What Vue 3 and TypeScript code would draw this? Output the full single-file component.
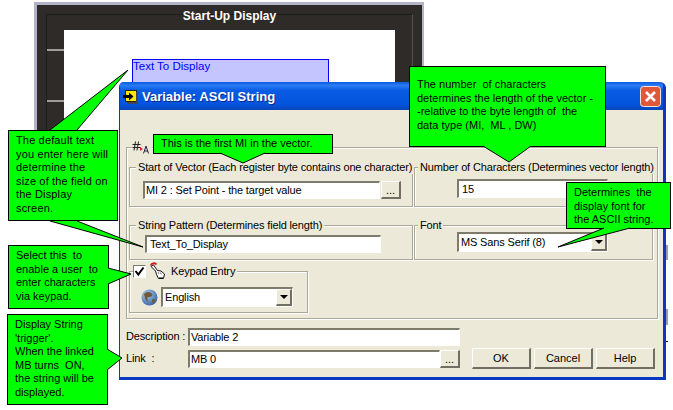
<script setup lang="ts">
interface Callout { x: number; y: number; w: number; h: number; lines: string[]; cls?: string }
const callouts: Callout[] = [
  { x: 8, y: 130, w: 110, h: 91, lines: ['The default text', 'you enter here will', 'determine the', 'size of the field on', 'the Display', 'screen.'], cls: 'airy' },
  { x: 153, y: 134, w: 180, h: 20, lines: ['This is the first MI in the vector.'], cls: 'tight' },
  { x: 409, y: 66, w: 197, h: 81, lines: ['The number  of characters', 'determines the length of the vector -', '-relative to the byte length of  the', 'data type (MI,  ML , DW)'], cls: 'deep' },
  { x: 566, y: 182, w: 105, h: 47, lines: ['Determines  the', 'display font for', 'the ASCII string.'] },
  { x: 8, y: 245, w: 101, h: 64, lines: ['Select this  to', 'enable a user  to', 'enter characters', 'via keypad.'] },
  { x: 7, y: 314, w: 101, h: 91, lines: ['Display String', "'trigger'.", 'When the linked', 'MB turns  ON,', 'the string will be', 'displayed.'] },
]
const tails: string[] = [
  '50,130 128,70 77,130',
  '50,221 143,247 77,221',
  '220,153 243,163 265,153',
  '483,146 509,162 531,146',
  '604,228 558,247 630,228',
  '108,268 131,274 108,284',
  '107,349 122,358 107,370',
]
</script>

<template>
  <div class="stage">
    <section class="backdrop">
      <div class="bezel">
        <h1 class="bezel-title">Start-Up Display</h1>
        <div class="bezel-body">
          <i class="tick"></i>
          <i class="tick second"></i>
          <div class="screen"></div>
        </div>
      </div>
    </section>
    <div class="field-box">Text To Display</div>
    <i class="behind b1"></i>
    <i class="behind b2"></i>
    <i class="behind b3"></i>

    <section class="dialog">
      <header class="titlebar">
        <svg class="title-icon" width="15" height="15" viewBox="0 0 15 15">
          <rect x="2.500" y="1.500" width="11" height="11" fill="#ffe900" stroke="#222" />
          <rect x="13" y="3" width="2" height="11" fill="#445" />
          <rect x="4" y="13" width="11" height="2" fill="#445" />
          <path d="M0 6h6V3.500L10.500 7.500 6 11.500V9H0z" fill="#000" />
        </svg>
        <span class="title-text">Variable: ASCII String</span>
        <button class="close">
          <svg width="21" height="21" viewBox="0 0 21 21">
            <rect x=".5" y=".5" width="20" height="20" rx="3" fill="#e0583a" stroke="#f6e4dc" />
            <path d="M6 6l9 9M15 6l-9 9" stroke="#fff" stroke-width="2.600" />
          </svg>
        </button>
      </header>

      <div class="client">
        <fieldset class="group main">
          <legend class="main-legend">
            <svg width="17" height="13" viewBox="0 0 17 13">
              <path d="M3.500 .5L2 9.500M6.500 .5L5 9.500M.5 3.500h8M.5 6.500h8" stroke="#222" fill="none" />
              <path d="M8 6l3 2-3 2z" fill="#d22" />
              <path d="M11.500 12.500L14 5l2.500 7.500M12.500 10h3.500" stroke="#224" fill="none" />
            </svg>
          </legend>
          <div class="main-grid">
            <fieldset class="group">
              <legend>Start of Vector (Each register byte contains one character)</legend>
              <div class="row vector-row">
                <div class="sunken grow">MI 2 : Set Point - the target value</div>
                <button class="raised dots">...</button>
              </div>
            </fieldset>
            <fieldset class="group col2">
              <legend>Number of Characters (Determines vector length)</legend>
              <div class="row chars-row"><div class="sunken grow pad">15</div></div>
            </fieldset>
            <fieldset class="group">
              <legend>String Pattern (Determines field length)</legend>
              <div class="row pattern-row"><div class="sunken grow pad">Text_To_Display</div></div>
            </fieldset>
            <fieldset class="group col2">
              <legend>Font</legend>
              <div class="row font-row">
                <div class="sunken grow combo">MS Sans Serif (8)<span class="arrow"></span></div>
              </div>
            </fieldset>
          </div>

          <fieldset class="group keypad">
            <legend class="keypad-legend">
              <span class="check">
                <svg width="11" height="11" viewBox="0 0 11 11"><path d="M1.500 5l2.800 3.500L9.500 1.500" stroke="#000" stroke-width="2" fill="none" /></svg>
              </span>
              <svg class="hand" width="16" height="18" viewBox="0 0 16 18">
                <path d="M.8 3.500C1.500 1 5 .5 6.500 2.500" stroke="#d01818" stroke-width="1.800" fill="none" />
                <path d="M1 4.500l2.500-1.500 4 5.500 3.500.5 3.500 3-1 4.500H8.500L6.500 12.500 5.500 9z" fill="#fff" stroke="#111" />
                <path d="M8 10l1 2M10.500 10.500l.8 2M9 15.500h4" stroke="#777" fill="none" />
              </svg>
              <span class="keypad-text">Keypad Entry</span>
            </legend>
            <div class="row lang-row">
              <svg class="globe" width="17" height="17" viewBox="0 0 17 17">
                <defs>
                  <radialGradient id="globeFill" cx=".35" cy=".3" r=".8">
                    <stop offset="0" stop-color="#a8ccf0" />
                    <stop offset="1" stop-color="#2f5f9f" />
                  </radialGradient>
                </defs>
                <circle cx="8.500" cy="8.500" r="8" fill="url(#globeFill)" />
                <path d="M4 4c3-2 6-1 7 1s-1 3-3 3-2 2-1 4-3-1-3-3-2-3 0-5zM12 10c2 0 3 0 2 2s-3 3-3 1 0-3 1-3z" fill="#6f5a3a" />
              </svg>
              <div class="sunken grow combo">English<span class="arrow"></span></div>
            </div>
          </fieldset>
        </fieldset>

        <div class="footer">
          <div class="meta">
            <div class="meta-row">
              <span class="meta-label">Description :</span>
              <div class="sunken desc">Variable 2</div>
            </div>
            <div class="meta-row">
              <span class="meta-label">Link &nbsp;:</span>
              <div class="sunken link">MB 0</div>
              <button class="raised dots">...</button>
            </div>
          </div>
          <div class="actions">
            <button class="raised action">OK</button>
            <button class="raised action">Cancel</button>
            <button class="raised action">Help</button>
          </div>
        </div>
      </div>
    </section>

    <div
      v-for="(c, i) in callouts"
      :key="i"
      class="callout"
      :class="c.cls"
      :style="{ left: c.x + 'px', top: c.y + 'px', width: c.w + 'px', height: c.h + 'px' }"
    >
      <div v-for="(l, j) in c.lines" :key="j">{{ l }}</div>
    </div>

    <svg class="tails" width="673" height="410" viewBox="0 0 673 410">
      <g v-for="(t, i) in tails" :key="i">
        <polygon :points="t" fill="#00ff00" />
        <polyline :points="t" fill="none" stroke="#000" />
      </g>
    </svg>
  </div>
</template>

<style>
html, body { margin: 0; background: #fff; }
</style>

<style scoped>
.stage {
  position: relative;
  width: 673px;
  height: 410px;
  overflow: hidden;
  background: #fff;
  font-family: "Liberation Sans", Arial, sans-serif;
  font-size: 11px;
  letter-spacing: -.15px;
  color: #000;
}
.backdrop {
  position: absolute;
  left: 34px;
  top: 2px;
  width: 390px;
  height: 200px;
  box-sizing: border-box;
  border: solid #b4b4c8;
  border-width: 3px 2px 0 3px;
  background: #2f2b28;
}
.bezel {
  margin: 9px 9px 0;
  height: 190px;
  border: solid #1b1d1a;
  border-right-color: #56544f;
  border-width: 1px 1px 0 1px;
  display: flex;
  flex-direction: column;
}
.bezel-title {
  margin: -9px 0 0;
  height: 24px;
  line-height: 21px;
  text-align: center;
  font-size: 12px;
  font-weight: 700;
  letter-spacing: 0;
  color: #fff;
}
.bezel-body { position: relative; flex: 1; padding: 0 17px; }
.screen { height: 100%; background: #fff; }
.tick { position: absolute; left: 0; top: 19px; width: 17px; height: 2px; background: #a09c98; }
.tick.second { top: 70px; }
.field-box {
  position: absolute;
  left: 132px;
  top: 59px;
  width: 197px;
  height: 24px;
  box-sizing: border-box;
  border: 1px solid #0000ff;
  background: #c4c4ff;
  color: #0000ff;
  font-size: 11.500px;
  line-height: 13px;
  letter-spacing: 0;
}
.behind { position: absolute; left: 666px; width: 2px; background: #9a9aa8; }
.b1 { top: 245px; height: 15px; }
.b2 { top: 309px; height: 16px; }
.b3 { top: 341px; height: 1px; background: #000; }
.dialog {
  position: absolute;
  left: 119px;
  top: 82px;
  width: 547px;
  height: 298px;
  box-sizing: border-box;
  display: flex;
  flex-direction: column;
  border: solid #0a38c0;
  border-width: 0 3px 3px 1px;
  border-top-left-radius: 5px;
  border-top-right-radius: 6px;
  background: #ece9d8;
}
.titlebar {
  height: 28px;
  flex: none;
  display: flex;
  align-items: center;
  padding: 0 2px 0 3px;
  border-top-left-radius: 4px;
  border-top-right-radius: 4px;
  background: linear-gradient(180deg, #0a5ae0 0%, #2a7cf4 12%, #0a5ce4 30%, #0454dc 80%, #0a44b8 100%);
}
.title-icon { margin-right: 4px; flex: none; }
.title-text {
  flex: 1;
  color: #fff;
  font-size: 13px;
  font-weight: 700;
  letter-spacing: 0;
  text-shadow: 1px 1px 0 #0a2a90;
}
.close { width: 21px; height: 21px; padding: 0; border: 0; background: none; display: block; flex: none; }
.client {
  flex: 1;
  padding: 31px 5px 0 6px;
  display: flex;
  flex-direction: column;
}
.group {
  margin: 0;
  padding: 0;
  min-width: 0;
  border: 1px solid #aca899;
  box-shadow: 1px 1px 0 #fff, inset 1px 1px 0 #fff;
}
.group legend {
  margin-left: 6px;
  padding: 0 2px;
  line-height: 13px;
  white-space: nowrap;
  background: #ece9d8;
}
.group.col2 legend { margin-left: 3px; }
.main { height: 178px; box-sizing: border-box; padding: 0 2px; }
.group .main-legend { margin-left: 3px; height: 13px; padding: 0 3px 0 0; line-height: 0; }
.main-grid {
  margin-top: 7px;
  display: grid;
  grid-template-columns: 284px 239px;
  gap: 12px 1px;
}
.main-grid .group { height: 46px; box-sizing: border-box; }
.main-grid .group:nth-child(n + 3) { height: 41px; }
.row { display: flex; align-items: stretch; }
.vector-row { margin: 7px 11px 0 13px; height: 18px; gap: 1px; }
.chars-row { margin: 5px 44px 0 42px; height: 19px; }
.pattern-row { margin: 3px 31px 0 15px; height: 18px; }
.font-row { margin: 0 44px 0 42px; height: 20px; }
.grow { flex: 1; min-width: 0; }
.sunken {
  box-sizing: border-box;
  display: flex;
  align-items: center;
  border: solid;
  border-width: 2px 1px 1px 2px;
  border-color: #7f7b6c #fff #fff #7f7b6c;
  background: #fff;
  padding-left: 1px;
  line-height: 13px;
  white-space: nowrap;
  overflow: hidden;
}
.sunken.pad { padding-left: 3px; }
.combo { position: relative; padding-left: 2px; }
.arrow {
  position: absolute;
  right: 0;
  top: 0;
  bottom: 0;
  width: 16px;
  background: #ece9d8;
  border: solid;
  border-width: 1px 2px 2px 1px;
  border-color: #fff #716f64 #716f64 #fff;
  box-sizing: border-box;
}
.arrow::after {
  content: "";
  position: absolute;
  left: 3px;
  top: 5px;
  border: 4px solid transparent;
  border-top: 4px solid #000;
  border-bottom: 0;
}
.raised {
  box-sizing: border-box;
  padding: 0;
  background: #ece9d8;
  border: solid;
  border-width: 1px 2px 2px 1px;
  border-color: #fff #716f64 #716f64 #fff;
  font: inherit;
  letter-spacing: 0;
  color: #000;
}
.dots { width: 20px; flex: none; }
.keypad { width: 179px; height: 49px; box-sizing: border-box; margin-top: 4px; }
.group .keypad-legend {
  margin-left: 3px;
  padding: 0 2px 0 0;
  height: 14px;
  display: flex;
  align-items: center;
}
.check {
  width: 13px;
  height: 13px;
  box-sizing: border-box;
  border: solid 1px;
  border-color: #7f7b6c #fff #fff #7f7b6c;
  background: #fff;
  display: flex;
  align-items: center;
  justify-content: center;
  flex: none;
}
.hand { margin: 0 0 0 4px; flex: none; }
.keypad-text { margin-left: 5px; }
.lang-row { margin: 9px 14px 0 11px; height: 20px; gap: 3px; align-items: center; }
.lang-row .sunken { height: 20px; }
.globe { flex: none; }
.footer {
  margin-top: 9px;
  display: flex;
  justify-content: space-between;
  padding-right: 3px;
}
.meta { display: flex; flex-direction: column; gap: 4px; }
.meta-row { display: flex; align-items: stretch; height: 18px; }
.meta-label { width: 62px; flex: none; line-height: 16px; white-space: nowrap; }
.desc { width: 272px; }
.link { width: 252px; }
.actions { display: flex; align-items: flex-end; gap: 3px; margin-bottom: -1px; }
.action { width: 59px; height: 21px; }
.callout {
  position: absolute;
  box-sizing: border-box;
  border: 1px solid #000;
  background: #00ff00;
  padding: 3px 0 0 7px;
  line-height: 13.500px;
  letter-spacing: 0;
  white-space: pre;
}
.callout.airy { letter-spacing: .15px; }
.callout.tight { padding-top: 2px; }
.callout.deep { padding-top: 11px; }
.tails { position: absolute; left: 0; top: 0; pointer-events: none; }
</style>
